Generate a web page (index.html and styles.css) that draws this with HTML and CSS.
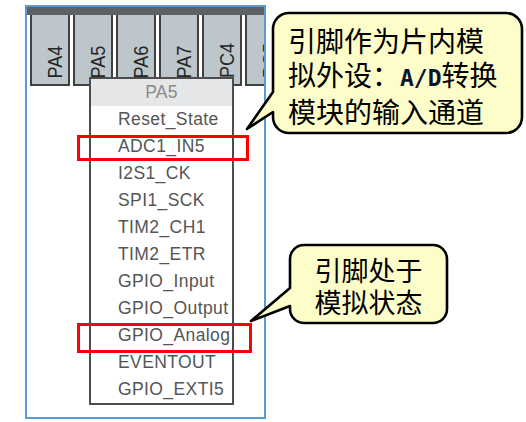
FILE: index.html
```html
<!DOCTYPE html>
<html lang="zh-CN">
<head>
<meta charset="utf-8">
<title>PA5 pin menu</title>
<link rel="stylesheet" href="styles.css">
</head>
<body>
<div class="stage">
  <div class="panel">
    <div class="topbar"></div>
    <div class="pins">
      <div class="pin"><span>PA4</span></div>
      <div class="pin"><span>PA5</span></div>
      <div class="pin"><span>PA6</span></div>
      <div class="pin"><span>PA7</span></div>
      <div class="pin"><span>PC4</span></div>
      <div class="pin"><span>PC5</span></div>
    </div>
    <div class="menu">
      <div class="menu-head">PA5</div>
      <ul class="menu-list">
        <li>Reset_State</li>
        <li>ADC1_IN5</li>
        <li>I2S1_CK</li>
        <li>SPI1_SCK</li>
        <li>TIM2_CH1</li>
        <li>TIM2_ETR</li>
        <li>GPIO_Input</li>
        <li>GPIO_Output</li>
        <li>GPIO_Analog</li>
        <li>EVENTOUT</li>
        <li>GPIO_EXTI5</li>
      </ul>
    </div>
  </div>

  <div class="mark mark-adc"></div>
  <div class="mark mark-analog"></div>

  <div class="callout callout-a">
    <svg class="bubble" width="249" height="120" viewBox="0 0 249 120">
      <path d="M16,0 H233 A16,16 0 0 1 249,16 V104 A16,16 0 0 1 233,120 H16 A16,16 0 0 1 0,104 V99 L-26,116 L0,79 V16 A16,16 0 0 1 16,0 Z"/>
    </svg>
    <p>引脚作为片内模<br>拟外设：<b class="ad">A/D</b>转换<br>模块的输入通道</p>
  </div>

  <div class="callout callout-b">
    <svg class="bubble" width="157" height="78" viewBox="0 0 157 78">
      <path d="M14,0 H143 A14,14 0 0 1 157,14 V64 A14,14 0 0 1 143,78 H14 A14,14 0 0 1 0,64 V61 L-39,76 L0,43 V14 A14,14 0 0 1 14,0 Z"/>
    </svg>
    <p>引脚处于<br>模拟状态</p>
  </div>
</div>
</body>
</html>
```

FILE: styles.css
```css
html, body {
  margin: 0;
  padding: 0;
  background: #ffffff;
}

.stage {
  position: relative;
  width: 526px;
  height: 422px;
  overflow: hidden;
}

.panel {
  position: relative;
  margin: 5px 0 0 25px;
  width: 237px;
  height: 410px;
  border: 2px solid #5b9bd5;
  background: #ffffff;
  overflow: hidden;
}

.topbar {
  height: 8px;
  background: #5e6163;
}

.pins {
  display: flex;
  gap: 3px;
  padding-left: 3px;
  height: 71px;
}

.pin {
  flex: 0 0 40px;
  box-sizing: border-box;
  border: 2px solid #404040;
  border-top: 0;
  background: #bcc6cb;
  display: flex;
  align-items: flex-end;
  padding: 0 0 3px 14px;
}

.pin span {
  writing-mode: vertical-rl;
  transform: rotate(180deg) scaleY(0.86);
  font-family: "Liberation Sans", Arial, sans-serif;
  font-size: 21px;
  line-height: 17px;
  color: #262626;
}

.menu {
  position: absolute;
  left: 62px;
  top: 70px;
  width: 141px;
  border: 2px solid #4d4d4d;
  background: #ffffff;
  font-family: "Liberation Sans", Arial, sans-serif;
  font-size: 17.5px;
}

.menu-head {
  height: 27px;
  line-height: 27px;
  text-align: center;
  background: #e4e6e7;
  color: #8a8a8a;
  letter-spacing: 0.3px;
}

.menu-list {
  list-style: none;
  margin: 0;
  padding: 0;
}

.menu-list li {
  height: 27px;
  line-height: 27px;
  padding-left: 27px;
  color: #555555;
  letter-spacing: 0.4px;
  white-space: nowrap;
}

.mark {
  position: absolute;
  box-sizing: border-box;
  border: 3px solid #ff0000;
}

.mark-adc {
  left: 77px;
  top: 135px;
  width: 172px;
  height: 26px;
}

.mark-analog {
  left: 77px;
  top: 323px;
  width: 175px;
  height: 30px;
}

.callout {
  position: absolute;
}

.bubble {
  position: absolute;
  left: 0;
  top: 0;
  overflow: visible;
}

.bubble path {
  fill: #fdfdca;
  stroke: #000000;
  stroke-width: 2.6;
  stroke-linejoin: round;
}

.callout p {
  position: relative;
  margin: 0;
  font-family: "Noto Sans CJK SC", sans-serif;
  color: #000000;
}

.callout-a {
  left: 273px;
  top: 13px;
  width: 249px;
  height: 120px;
}

.callout-a p {
  padding: 11px 0 0 15px;
  font-size: 28px;
  line-height: 33.5px;
}

.ad {
  font-family: "DejaVu Sans Mono", monospace;
  font-size: 23px;
  font-weight: bold;
  color: #0a1430;
}

.callout-b {
  left: 290px;
  top: 245px;
  width: 157px;
  height: 78px;
}

.callout-b p {
  padding-top: 9px;
  text-align: center;
  font-size: 27px;
  line-height: 32px;
}
```
